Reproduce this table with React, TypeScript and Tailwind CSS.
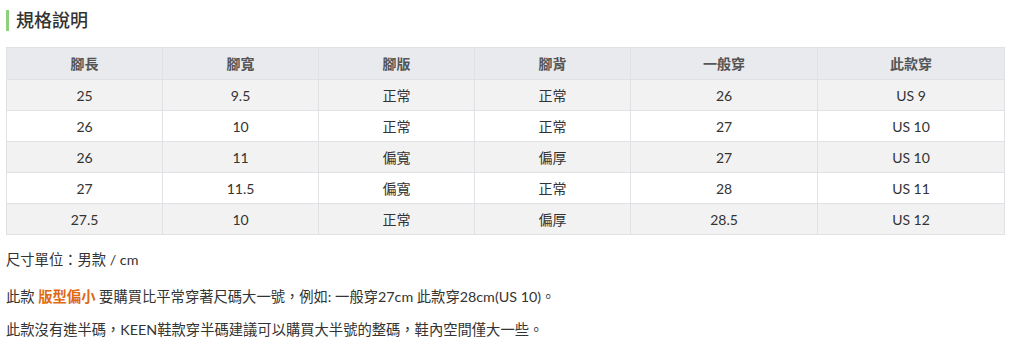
import React from "react";

const headers = ["腳長", "腳寬", "腳版", "腳背", "一般穿", "此款穿"];
const rows = [
  ["25", "9.5", "正常", "正常", "26", "US 9"],
  ["26", "10", "正常", "正常", "27", "US 10"],
  ["26", "11", "偏寬", "偏厚", "27", "US 10"],
  ["27", "11.5", "偏寬", "正常", "28", "US 11"],
  ["27.5", "10", "正常", "偏厚", "28.5", "US 12"],
];
const widths = ["w-[156px]", "w-[156px]", "w-[156px]", "w-[156px]", "w-[187px]", "w-[187px]"];

export default function App() {
  return (
    <div
      className="w-[1009px] h-[346px] bg-white text-[#333] px-[6px]"
      style={{ fontFamily: 'Lato, "Noto Sans CJK TC", sans-serif' }}
    >
      <div className="pt-[10px] flex items-center">
        <div className="w-[3px] h-[21px] bg-[#8ed07b]" />
        <h2 className="ml-[7px] text-[18px] leading-[21px] font-medium text-[#333]">規格說明</h2>
      </div>
      <table className="mt-[16px] w-[998px] border-collapse table-fixed text-[14px]">
        <thead>
          <tr className="bg-[#e8eaed]">
            {headers.map((h, i) => (
              <th
                key={h}
                className={`${widths[i]} h-[32px] border border-[#dfe1e5] font-bold text-[#555] text-center p-0`}
              >
                {h}
              </th>
            ))}
          </tr>
        </thead>
        <tbody>
          {rows.map((r, ri) => (
            <tr key={ri} className={ri % 2 === 0 ? "bg-[#f2f2f2]" : "bg-white"}>
              {r.map((c, ci) => (
                <td key={ci} className="h-[31px] border border-[#dfe1e5] text-center p-0 text-[#333]">
                  {c}
                </td>
              ))}
            </tr>
          ))}
        </tbody>
      </table>
      <div className="text-[14.3px] leading-[20px]">
        <p className="mt-[15px]">尺寸單位：男款 / cm</p>
        <p className="mt-[17px]">
          此款 <span className="font-bold text-[#e06a10]">版型偏小</span> 要購買比平常穿著尺碼大一號，例如: 一般穿27cm 此款穿28cm(US 10)。
        </p>
        <p className="mt-[13px]">此款沒有進半碼，KEEN鞋款穿半碼建議可以購買大半號的整碼，鞋內空間僅大一些。</p>
      </div>
    </div>
  );
}
